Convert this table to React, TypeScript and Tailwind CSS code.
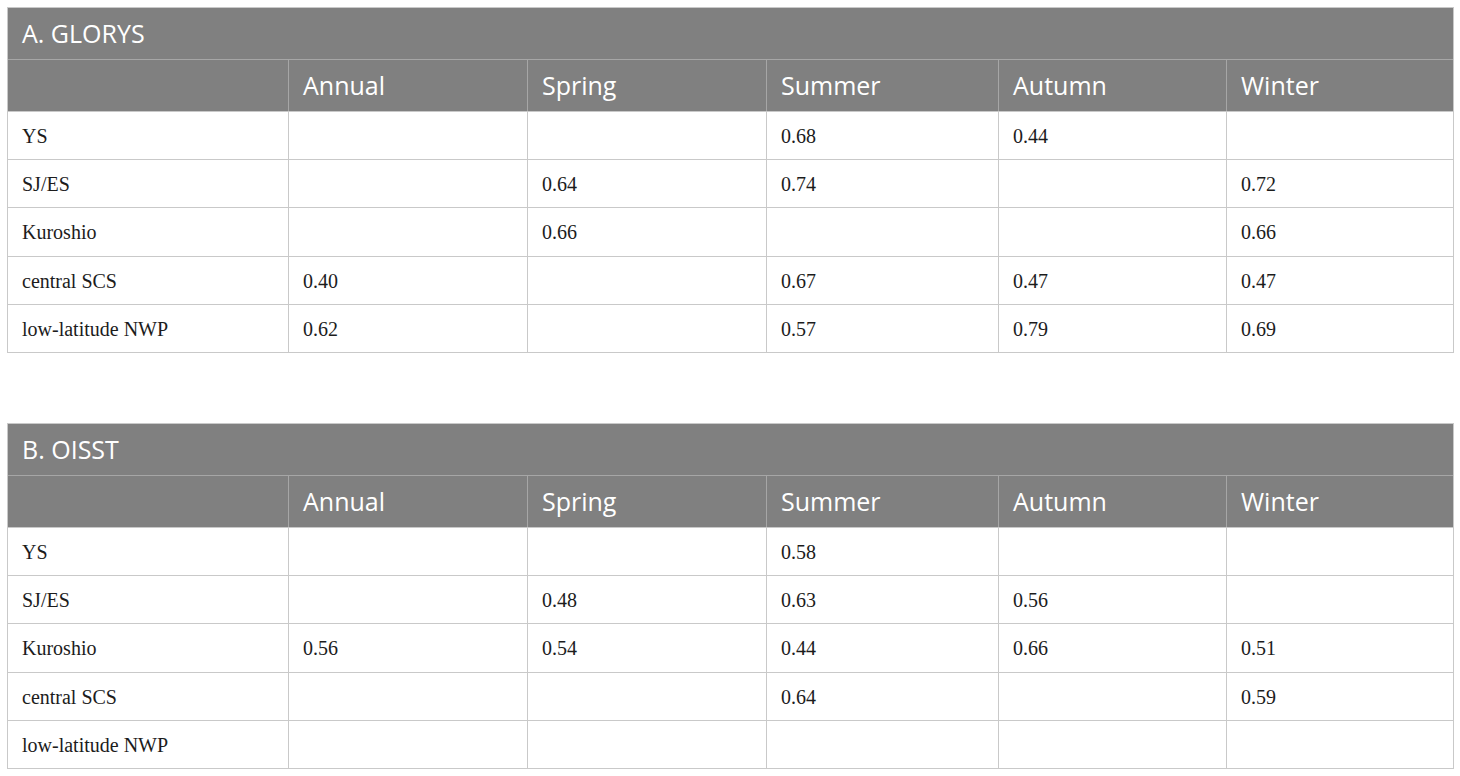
const columns = ["", "Annual", "Spring", "Summer", "Autumn", "Winter"]
const widths = ["w-[280px]", "w-[239px]", "w-[239px]", "w-[232px]", "w-[228px]", "w-[227px]"]
const rowHeights = ["h-[48px]", "h-[48px]", "h-[49px]", "h-[48px]", "h-[48px]"]

const tables = [
  {
    title: "A. GLORYS",
    rows: [
      ["YS", "", "", "0.68", "0.44", ""],
      ["SJ/ES", "", "0.64", "0.74", "", "0.72"],
      ["Kuroshio", "", "0.66", "", "", "0.66"],
      ["central SCS", "0.40", "", "0.67", "0.47", "0.47"],
      ["low-latitude NWP", "0.62", "", "0.57", "0.79", "0.69"],
    ],
  },
  {
    title: "B. OISST",
    rows: [
      ["YS", "", "", "0.58", "", ""],
      ["SJ/ES", "", "0.48", "0.63", "0.56", ""],
      ["Kuroshio", "0.56", "0.54", "0.44", "0.66", "0.51"],
      ["central SCS", "", "", "0.64", "", "0.59"],
      ["low-latitude NWP", "", "", "", "", ""],
    ],
  },
]

function DataTable({ title, rows }) {
  return (
    <div className="w-[1447px] border border-[#c9c9c9]">
      <div className="h-[51px] bg-[#808080] flex items-center px-[14px] text-white text-[25px] font-['Open_Sans',sans-serif]">
        {title}
      </div>
      <div className="flex h-[52px] bg-[#808080] border-t border-[#a6a6a6] text-white text-[25px] font-['Open_Sans',sans-serif]">
        {columns.map((c, i) => (
          <div
            key={i}
            className={`${widths[i]} ${i > 0 ? "border-l border-[#a6a6a6] px-[14px]" : "px-[14px]"} flex items-center shrink-0`}
          >
            {c}
          </div>
        ))}
      </div>
      {rows.map((row, r) => (
        <div key={r} className={`flex ${rowHeights[r]} border-t border-[#c9c9c9] text-[#1c1c1c] text-[20px] font-['Liberation_Serif',serif]`}>
          {row.map((cell, i) => (
            <div
              key={i}
              className={`${widths[i]} ${i > 0 ? "border-l border-[#c9c9c9] px-[14px]" : "px-[14px]"} flex items-center shrink-0`}
            >
              {cell}
            </div>
          ))}
        </div>
      ))}
    </div>
  )
}

export default function App() {
  return (
    <div className="w-[1460px] h-[776px] bg-white pt-[7px] pl-[7px] flex flex-col gap-[70px]">
      {tables.map((t) => (
        <DataTable key={t.title} title={t.title} rows={t.rows} />
      ))}
    </div>
  )
}
